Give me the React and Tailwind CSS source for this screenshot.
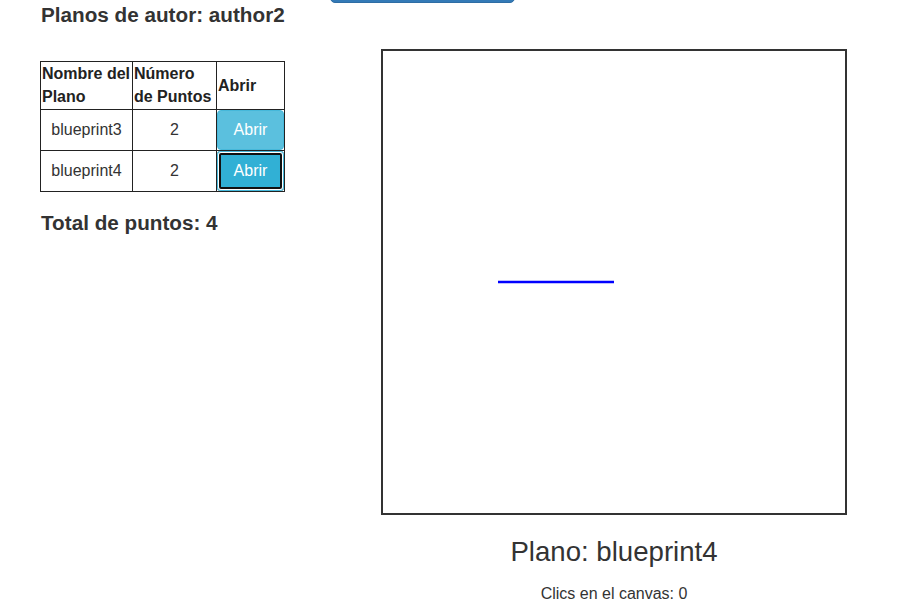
import React from 'react';

const blueprints = [
  { name: 'blueprint3', points: 2 },
  { name: 'blueprint4', points: 2 },
];

export default function App() {
  const selected = 'blueprint4';
  const total = blueprints.reduce((s, b) => s + b.points, 0);

  return (
    <div className="min-h-screen bg-white text-[#333] font-['Liberation_Sans',Arial,sans-serif] overflow-hidden">
      {/* Top button (scrolled out of view, only its lower edge shows) */}
      <div className="flex -mt-[31px] pl-[330px]">
        <button
          aria-label="Cargar planos"
          className="h-[34px] w-[185px] rounded-[5px] border border-[#2e6da4] bg-[#337ab7]"
        />
      </div>

      <div className="flex pl-[40px]">
        {/* Left column */}
        <div className="w-[341px] shrink-0 pt-[1px]">
          <h4 className="text-[20.7px] leading-[22.8px] font-bold pl-[1px]">
            Planos de autor: author2
          </h4>

          <table className="mt-[34px] table-fixed border-collapse w-[244px] text-[16px] leading-[23px]">
            <colgroup>
              <col className="w-[92px]" />
              <col className="w-[84px]" />
              <col className="w-[68px]" />
            </colgroup>
            <thead>
              <tr className="h-[48px]">
                <th className="border border-[#222] p-0 pl-[1px] text-left align-middle font-bold text-[#222]">
                  Nombre del Plano
                </th>
                <th className="border border-[#222] p-0 pl-[1px] text-left align-middle font-bold text-[#222]">
                  Número de Puntos
                </th>
                <th className="border border-[#222] p-0 pl-[1px] text-left align-middle font-bold text-[#222]">
                  Abrir
                </th>
              </tr>
            </thead>
            <tbody>
              {blueprints.map((bp) => (
                <tr key={bp.name}>
                  <td className="border border-[#222] p-0 text-center align-middle">{bp.name}</td>
                  <td className="border border-[#222] p-0 text-center align-middle">{bp.points}</td>
                  <td className="border border-[#222] p-0 align-middle">
                    {bp.name === selected ? (
                      <button className="block w-full h-[40px] rounded-[4px] bg-[#31b0d5] text-white text-[16px] shadow-[inset_0_0_0_1px_#46b8da,inset_0_0_0_2px_#ffffff,inset_0_0_0_4px_#111111]">
                        Abrir
                      </button>
                    ) : (
                      <button className="block w-full h-[40px] rounded-[4px] bg-[#5bc0de] text-white text-[16px] border border-[#46b8da]">
                        Abrir
                      </button>
                    )}
                  </td>
                </tr>
              ))}
            </tbody>
          </table>

          <h4 className="mt-[20px] text-[20.7px] leading-[22.8px] font-bold pl-[1px]">
            Total de puntos: {total}
          </h4>
        </div>

        {/* Right column */}
        <div className="flex flex-col items-center w-[466px] shrink-0">
          <div className="mt-[46px] w-[466px] h-[466px] border-2 border-[#333] bg-white">
            <svg width="462" height="462" className="block">
              <line x1="115" y1="231" x2="231" y2="231" stroke="#0000ff" strokeWidth="2.3" />
            </svg>
          </div>
          <h3 className="mt-[22px] text-[27.6px] leading-[30px]">Plano: {selected}</h3>
          <p className="mt-[15px] text-[16px] leading-[24px]">Clics en el canvas: 0</p>
        </div>
      </div>
    </div>
  );
}
